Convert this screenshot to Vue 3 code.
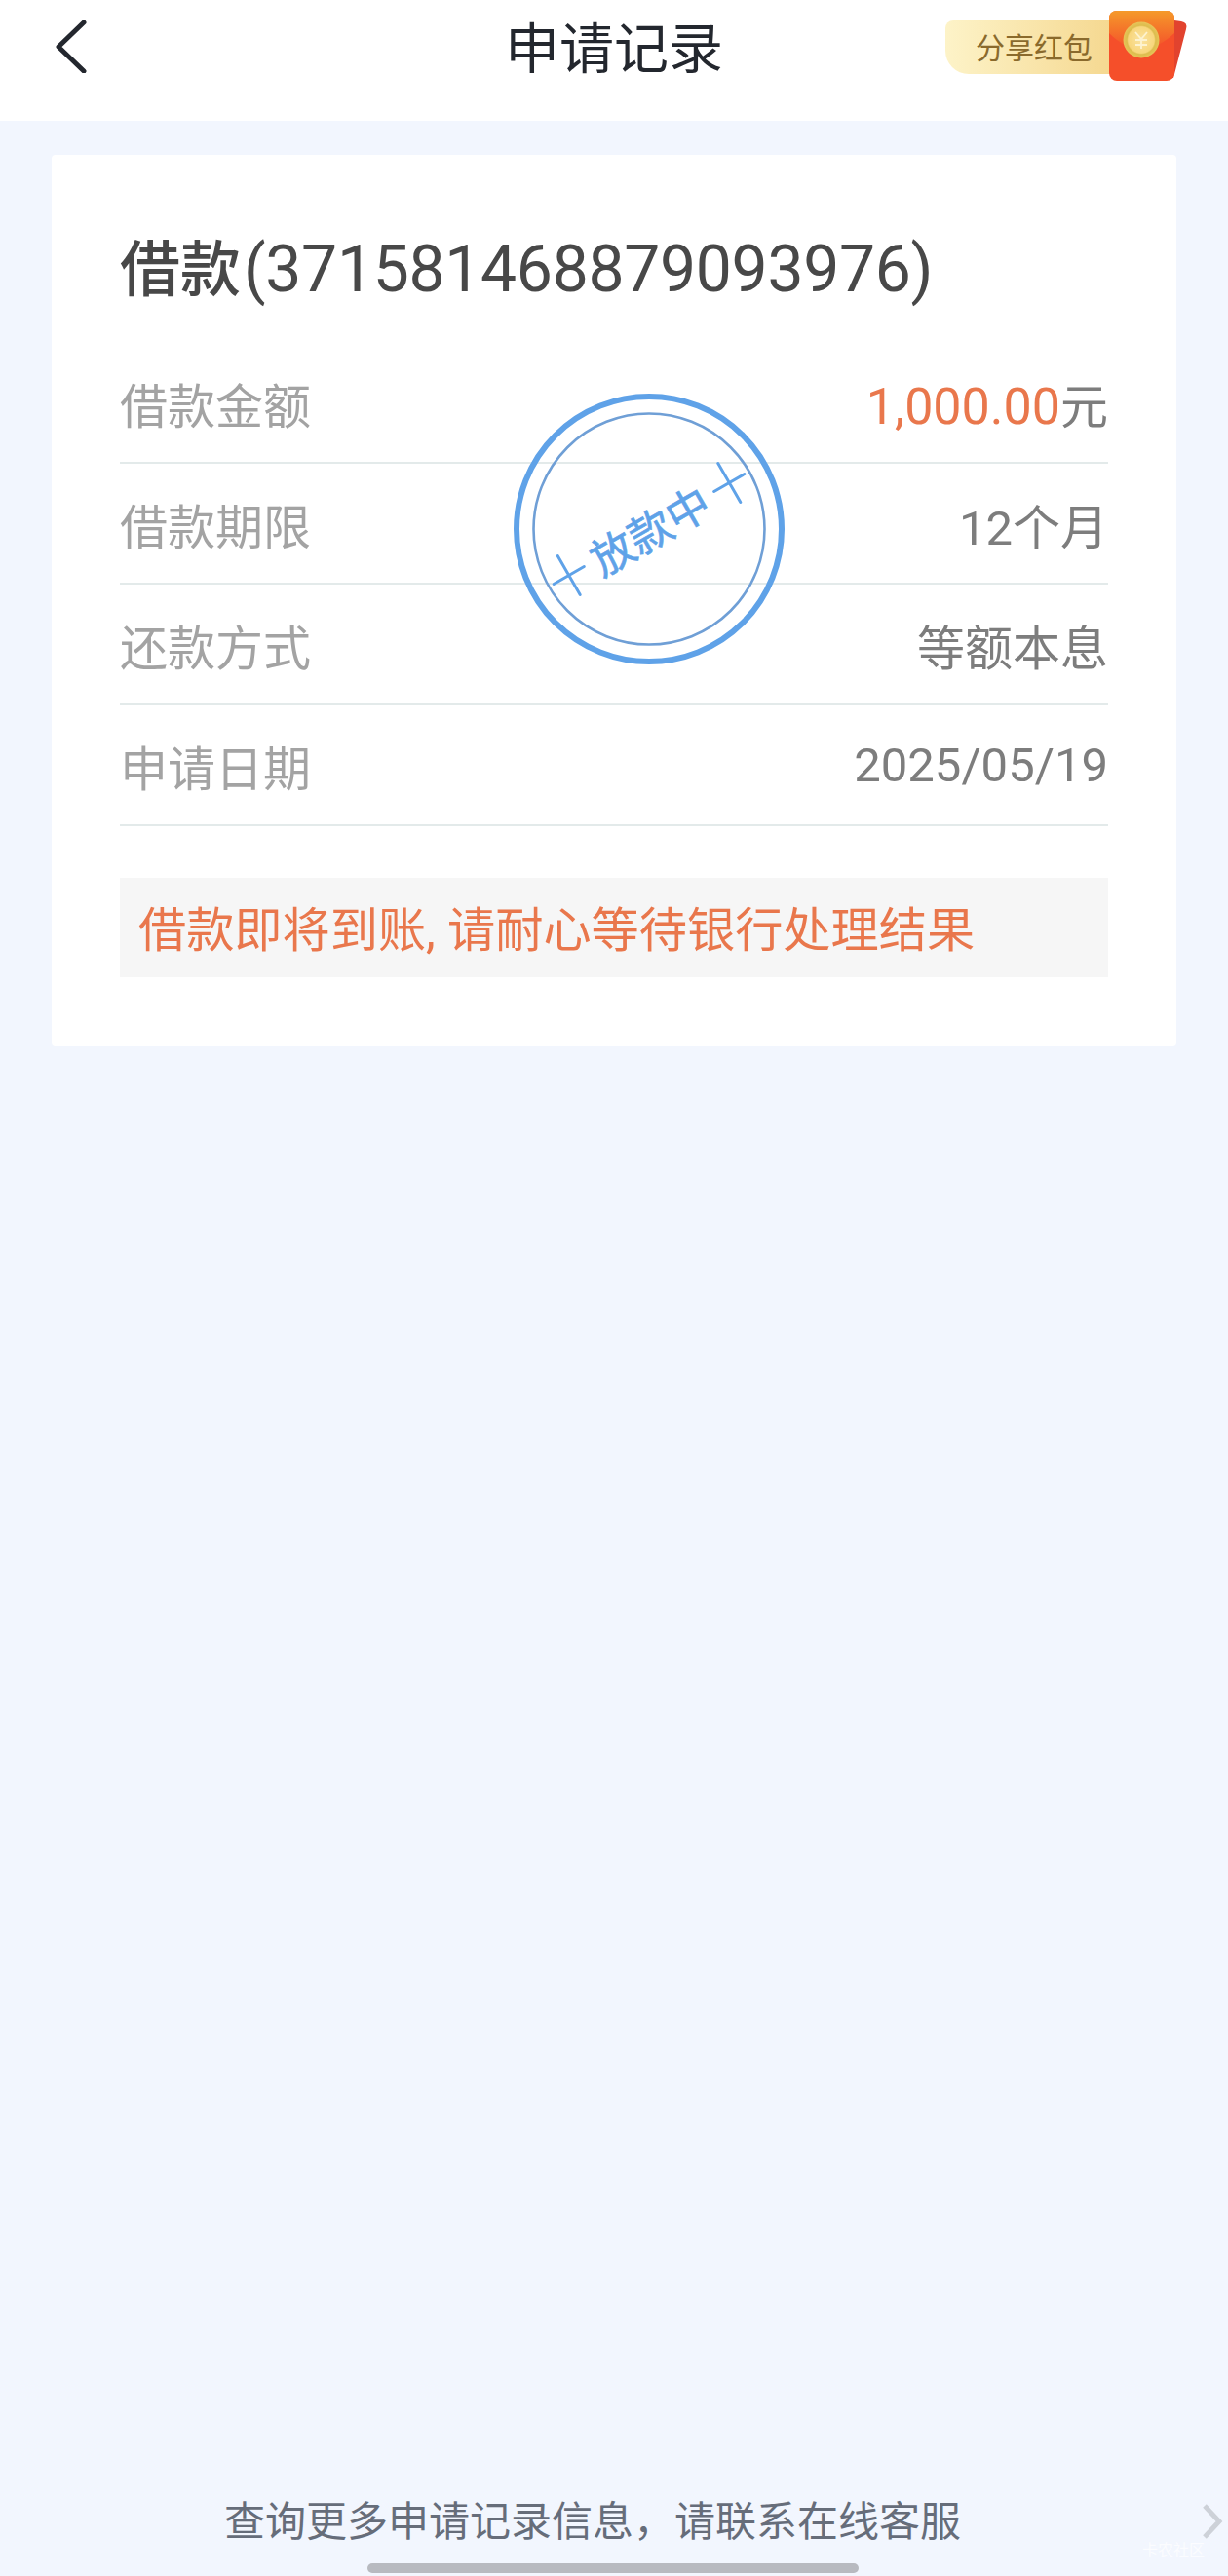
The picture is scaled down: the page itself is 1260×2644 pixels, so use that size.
<script setup>
const rows = [
  { label: '借款金额', value: '1,000.00', unit: '元', accent: true },
  { label: '借款期限', value: '12个月' },
  { label: '还款方式', value: '等额本息' },
  { label: '申请日期', value: '2025/05/19' }
]
</script>

<template>
  <div class="page">
    <header class="topbar">
      <button class="back" aria-label="返回">
        <svg width="34" height="54" viewBox="0 0 34 54">
          <path d="M31 2 L5 27 L31 52" fill="none" stroke="#23272e" stroke-width="5" stroke-linecap="round" stroke-linejoin="round" />
        </svg>
      </button>
      <h1 class="heading">申请记录</h1>
      <div class="share">
        <span class="share-pill">分享红包</span>
        <svg class="packet" width="84" height="76" viewBox="0 0 84 76">
          <defs>
            <linearGradient id="flap" x1="0" y1="0" x2="0" y2="1">
              <stop offset="0" stop-color="#f59a2a" />
              <stop offset="1" stop-color="#f4502a" />
            </linearGradient>
            <radialGradient id="coin" cx="0.5" cy="0.5" r="0.5">
              <stop offset="0" stop-color="#fae3a0" />
              <stop offset="0.72" stop-color="#f8d67c" />
              <stop offset="0.8" stop-color="#dcbc4e" />
              <stop offset="1" stop-color="#e8c458" />
            </radialGradient>
          </defs>
          <path d="M60 10 L74 12 Q81 13 79 20 L66 70 L50 72 Z" fill="#e2432e" />
          <rect x="0" y="1" width="67" height="72" rx="8" fill="#f54f2a" />
          <path d="M0 9 Q0 1 8 1 H59 Q67 1 67 9 V24 Q50 40 33 40 Q16 40 0 24 Z" fill="url(#flap)" />
          <circle cx="33" cy="31" r="18.5" fill="url(#coin)" />
          <path d="M27 23 L33 30 L39 23 M33 30 V40 M27 31 H39 M27 36 H39" fill="none" stroke="#fdf3d0" stroke-width="1.8" />
        </svg>
      </div>
    </header>

    <section class="card">
      <h2 class="loan-id">借款<span class="loan-no">(371581468879093976)</span></h2>
      <ul class="details">
        <li v-for="row in rows" :key="row.label" class="row">
          <span class="label">{{ row.label }}</span>
          <span class="value">
            <span :class="{ accent: row.accent }">{{ row.value }}</span>{{ row.unit }}
          </span>
        </li>
      </ul>
      <p class="notice">借款即将到账, 请耐心等待银行处理结果</p>

      <svg class="stamp" width="290" height="290" viewBox="-145 -145 290 290">
        <circle r="136" fill="none" stroke="#5fa2e8" stroke-width="6" />
        <circle r="118.5" fill="none" stroke="#6f9fd6" stroke-width="2.6" />
        <g transform="rotate(-30)" fill="#5fa2e8">
          <text class="stamp-text" x="0" y="19" text-anchor="middle">放款中</text>
          <g stroke="#5fa2e8" stroke-width="3" stroke-linecap="round">
            <path d="M-113 0 H-77 M-95 -23 V23" />
            <path d="M77 0 H113 M95 -23 V23" />
          </g>
        </g>
      </svg>
    </section>

    <footer class="footer">
      <p class="help">查询更多申请记录信息，请联系在线客服</p>
      <svg class="more" width="24" height="38" viewBox="0 0 24 38">
        <path d="M4 3 L19 19 L4 35" fill="none" stroke="#cdd1d8" stroke-width="5" />
      </svg>
      <span class="mark">卡农社区</span>
      <div class="home-bar"></div>
    </footer>
  </div>
</template>

<style scoped>
.page {
  width: 1260px;
  height: 2644px;
  display: flex;
  flex-direction: column;
  background: #f2f6fe;
  font-family: Roboto, "Noto Sans CJK SC", sans-serif;
  overflow: hidden;
}

.topbar {
  position: relative;
  flex: none;
  height: 124px;
  background: #fff;
  display: flex;
  align-items: flex-start;
  justify-content: center;
}

.back {
  position: absolute;
  left: 55px;
  top: 21px;
  padding: 0;
  border: 0;
  background: none;
}

.back svg {
  display: block;
}

.heading {
  margin: 18px 0 0;
  font-size: 56px;
  line-height: 66px;
  font-weight: 400;
  color: #23272e;
}

.share {
  position: absolute;
  left: 970px;
  top: 10px;
  width: 250px;
  height: 76px;
}

.share-pill {
  position: absolute;
  left: 0;
  top: 11px;
  width: 172px;
  height: 55px;
  box-sizing: border-box;
  padding-left: 31px;
  padding-top: 1px;
  font-size: 30px;
  line-height: 55px;
  color: #8a6a2c;
  background: linear-gradient(90deg, #fdf3c8, #f5d890);
  border-radius: 8px 0 0 24px;
}

.packet {
  position: absolute;
  left: 168px;
  top: 0;
}

.card {
  position: relative;
  flex: none;
  box-sizing: border-box;
  width: 1154px;
  height: 915px;
  margin: 35px 0 0 53px;
  padding: 75px 70px 0;
  background: #fff;
  border-radius: 4px;
}

.loan-id {
  margin: 0 0 32px;
  height: 86px;
  font-size: 62px;
  line-height: 86px;
  font-weight: 500;
  color: #484848;
}

.loan-no {
  font-size: 66px;
  letter-spacing: -0.3px;
  margin-left: 3px;
  font-weight: 400;
}

.details {
  margin: 0;
  padding: 0;
  list-style: none;
}

.row {
  display: flex;
  align-items: center;
  justify-content: space-between;
  box-sizing: border-box;
  height: 124px;
  border-bottom: 2px solid #e3eaea;
  font-size: 49px;
}

.label {
  color: #a3a3a3;
}

.value {
  color: #7d7d7d;
}

.accent {
  font-size: 52px;
  color: #e9774c;
}

.notice {
  margin: 53px 0 0;
  box-sizing: border-box;
  height: 102px;
  padding: 3px 0 0 19px;
  font-size: 49.2px;
  line-height: 102px;
  color: #e9774c;
  background: #f6f6f6;
}

.stamp {
  position: absolute;
  left: 468px;
  top: 239px;
}

.stamp-text {
  font-size: 44.5px;
  font-weight: 400;
  stroke: #5fa2e8;
  stroke-width: 0.6px;
  font-family: "Noto Sans CJK SC", sans-serif;
}

.footer {
  position: relative;
  margin-top: auto;
  height: 90px;
}

.help {
  margin: 0;
  padding: 10px 44px 0 0;
  text-align: center;
  font-size: 42px;
  line-height: 50px;
  color: #666d7a;
}

.more {
  position: absolute;
  right: 4px;
  top: 15px;
}

.mark {
  position: absolute;
  right: 24px;
  top: 54px;
  font-size: 16px;
  line-height: 20px;
  color: #fbfcff;
}

.home-bar {
  position: absolute;
  left: 377px;
  bottom: 3px;
  width: 504px;
  height: 10px;
  border-radius: 5px;
  background: #b8bac0;
}
</style>
